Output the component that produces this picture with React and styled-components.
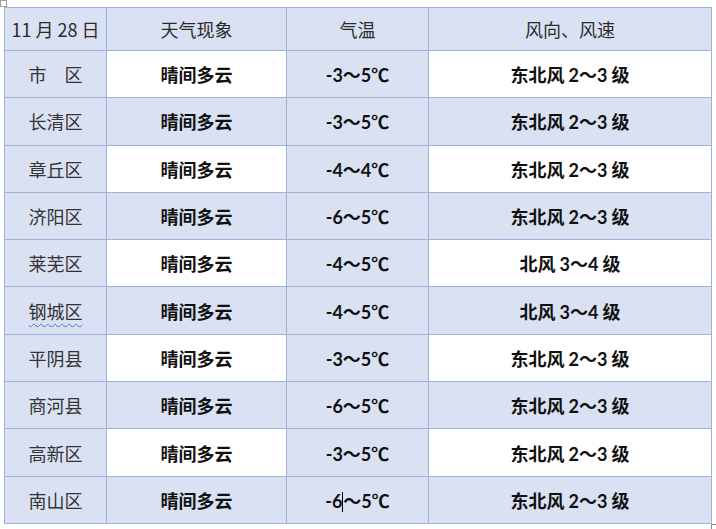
import React from "react";
import styled, { createGlobalStyle } from "styled-components";

const rows = [
  { area: "市\u2003区", temp: ["-3", "5"], wind: "东北风 2～3 级" },
  { area: "长清区", temp: ["-3", "5"], wind: "东北风 2～3 级" },
  { area: "章丘区", temp: ["-4", "4"], wind: "东北风 2～3 级" },
  { area: "济阳区", temp: ["-6", "5"], wind: "东北风 2～3 级" },
  { area: "莱芜区", temp: ["-4", "5"], wind: "北风 3～4 级" },
  { area: "钢城区", temp: ["-4", "5"], wind: "北风 3～4 级", squiggle: true },
  { area: "平阴县", temp: ["-3", "5"], wind: "东北风 2～3 级" },
  { area: "商河县", temp: ["-6", "5"], wind: "东北风 2～3 级" },
  { area: "高新区", temp: ["-3", "5"], wind: "东北风 2～3 级" },
  { area: "南山区", temp: ["-6", "5"], wind: "东北风 2～3 级", cursor: true },
];

const GlobalStyle = createGlobalStyle`
  body {
    margin: 0;
    background: #ffffff;
    font-family: "Noto Sans CJK SC", "Noto Sans", sans-serif;
  }
`;

const Page = styled.div`
  position: relative;
  width: 716px;
  height: 529px;
  padding: 7px 0 0 4px;
  box-sizing: border-box;
`;

const Table = styled.table`
  border-collapse: collapse;
  table-layout: fixed;
  width: 707px;
  border: 1px solid #8f9fc4;
`;

const Col = styled.col`
  width: ${(p) => p.$w}px;
`;

const HeadCell = styled.th`
  height: 42px;
  padding: 0;
  background: #d9e1f3;
  border: 1px solid #9fb2dc;
  font-weight: 400;
  font-size: 18px;
  color: #2b2b2b;
  text-align: center;
  vertical-align: middle;
`;

const Cell = styled.td`
  height: 46.3px;
  padding: 0;
  background: ${(p) => (p.$shade ? "#d9e1f3" : "#ffffff")};
  border: 1px solid #9fb2dc;
  font-size: 18px;
  font-weight: ${(p) => (p.$bold ? 700 : 400)};
  color: ${(p) => (p.$bold ? "#111111" : "#333333")};
  text-align: center;
  vertical-align: middle;
`;

const Num = styled.span`
  font-family: "Lato", "Noto Sans CJK SC", sans-serif;
  font-weight: 700;
`;

const Squiggle = styled.span`
  text-decoration: underline wavy #4a6fd1;
  text-decoration-thickness: 1px;
  text-underline-offset: 4px;
`;

const Caret = styled.span`
  display: inline-block;
  width: 1px;
  height: 20px;
  background: #000000;
  vertical-align: -4px;
`;

const Handle = styled.div`
  position: absolute;
  left: 0;
  top: 0;
  width: 5px;
  height: 5px;
  border: 1px solid #a0a0a0;
  background: #ffffff;
`;

const Resize = styled.div`
  position: absolute;
  left: 711px;
  top: 524px;
  width: 5px;
  height: 5px;
  border-left: 1px solid #8a8a8a;
  border-top: 1px solid #8a8a8a;
`;

function Temp({ range, cursor }) {
  return (
    <Num>
      {range[0]}
      {cursor && <Caret />}～{range[1]}℃
    </Num>
  );
}

function Wind({ text }) {
  const parts = text.split(/([0-9～]+)/);
  return parts.map((part, i) =>
    /[0-9]/.test(part) ? <Num key={i}>{part}</Num> : <span key={i}>{part}</span>
  );
}

export default function App() {
  return (
    <>
      <GlobalStyle />
      <Page>
        <Handle />
        <Table>
          <colgroup>
            <Col $w={102} />
            <Col $w={180} />
            <Col $w={142} />
            <Col $w={283} />
          </colgroup>
          <thead>
            <tr>
              <HeadCell>11 月 28 日</HeadCell>
              <HeadCell>天气现象</HeadCell>
              <HeadCell>气温</HeadCell>
              <HeadCell>风向、风速</HeadCell>
            </tr>
          </thead>
          <tbody>
            {rows.map((row, i) => {
              const shade = i % 2 === 1;
              return (
                <tr key={row.area}>
                  <Cell $shade>
                    {row.squiggle ? <Squiggle>{row.area}</Squiggle> : row.area}
                  </Cell>
                  <Cell $shade={shade} $bold>
                    晴间多云
                  </Cell>
                  <Cell $shade $bold>
                    <Temp range={row.temp} cursor={row.cursor} />
                  </Cell>
                  <Cell $shade={shade} $bold>
                    <Wind text={row.wind} />
                  </Cell>
                </tr>
              );
            })}
          </tbody>
        </Table>
        <Resize />
      </Page>
    </>
  );
}
